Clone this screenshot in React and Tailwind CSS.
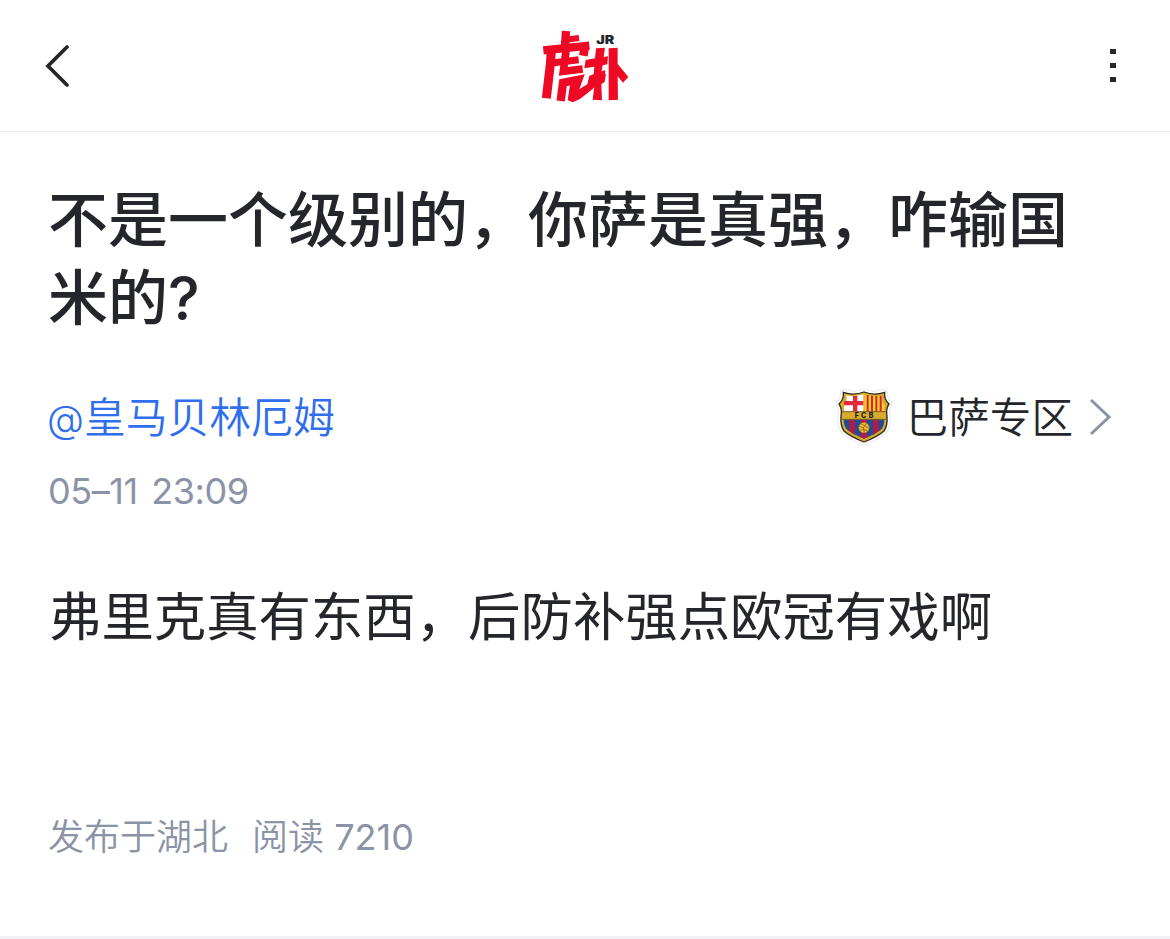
function HupuLogo() {
  return (
    <svg viewBox="0 0 330 270" className="mr-[10px] w-[110px] h-[90px]" aria-label="虎扑">
      <g fill="none" stroke="#ee0a24" strokeWidth="24">
        {/* left half of the mark */}
        <path d="M108 30L104 90" strokeWidth="25" />
        <path d="M106 56L147 51" strokeWidth="18" />
        <path d="M40 88L178 74" strokeWidth="25" />
        <path d="M165 74L160 104" strokeWidth="26" />
        <path d="M64 88L61 130L49 232" strokeWidth="27" />
        <path d="M60 127L146 116" strokeWidth="21" />
        <path d="M108 90L100 151L158 144" strokeWidth="23" />
        <path d="M92 240L99 185L145 176L132 212" strokeWidth="25" />
      </g>
      <g fill="#ee0a24">
        <path d="M121 184L150 174L144 207L172 190L178 164L226 147L222 184L198 196L150 234L128 244L113 238Z" />
        {/* right half of the mark */}
        <path d="M198 82L225 80L221 108L234 106L232 130L218 133L213 163L228 158L224 182L214 189L216 238L188 236L194 190L176 197L177 174L190 170L193 137L163 142L167 117L195 112Z" />
        <path d="M236 82L263 80L263 129L295 168L279 185L263 166L264 236L236 238Z" />
      </g>
      <text x="199" y="68" fontSize="36" fontWeight="900" fill="#24262b" textLength="54" lengthAdjust="spacingAndGlyphs" className="font-['Inter']">
        JR
      </text>
    </svg>
  )
}

const shieldPath =
  'M40 37Q70 48 102 36Q134 48 164 37Q162 59 177 72Q167 86 171 108Q173 136 163 152Q146 168 102 186Q58 168 41 152Q31 136 33 108Q37 86 27 72Q42 59 40 37Z'

function ClubBadge() {
  return (
    <svg viewBox="0 0 210 210" className="-mt-1 w-[70px] h-[70px]" aria-label="FCB">
      <defs>
        <clipPath id="shield">
          <path d={shieldPath} />
        </clipPath>
      </defs>
      <path d={shieldPath} fill="#fff" stroke="#dcdcdc" strokeWidth="20" strokeLinejoin="round" />
      <path d={shieldPath} fill="#d8ab2c" stroke="#fff" strokeWidth="16" strokeLinejoin="round" />
      <g clipPath="url(#shield)">
        <rect width="210" height="210" fill="#d8ab2c" />
        <path d="M49 46Q76 52 100 43V94H42V76Q53 66 49 46Z" fill="#fff" />
        <path d="M69 48H82V94H69ZM42 63H100V76H42Z" fill="#e22a3a" />
        <path d="M104 43Q130 52 155 46Q153 66 164 76L162 94H104Z" fill="#f8d030" />
        <path d="M110 45H116V94H110ZM123 47H129V94H123ZM136 48H142V94H136ZM149 47H155V94H149Z" fill="#d8232f" />
        <path d="M41 119H163Q162 138 155 147Q138 162 102 176Q66 162 49 147Q42 138 41 119Z" fill="#1f4c9a" />
        <path d="M58 119H75V165L58 154ZM92 119H112V172L102 176L92 172ZM129 119H146V154L129 165Z" fill="#b01c45" />
        <circle cx="102" cy="143" r="16" fill="#eebd2c" stroke="#8a6820" strokeWidth="2" />
        <path d="M88 139L100 143L110 130M100 143L103 157M94 132L102 136L116 145M92 151L101 148L113 153" fill="none" stroke="#6b5222" strokeWidth="2" />
      </g>
      <path d={shieldPath} fill="none" stroke="#2c2a22" strokeWidth="4" />
      <path d="M36 95H168M36 118H168" stroke="#4a3c18" strokeWidth="2" />
      <text x="74" y="114" fontSize="21" fontWeight="800" fill="#1c1c1c" textLength="56" className="font-['Inter']">
        FCB
      </text>
    </svg>
  )
}

function Header() {
  return (
    <header className="flex h-[132px] items-center justify-between border-b border-[#ebebed] pl-[44px] pr-[54px]">
      <svg viewBox="0 0 26 42" className="w-[26px] h-[42px]" fill="none" stroke="#24262b" strokeWidth="3.7">
        <path d="M23 2L4 21L23 40" strokeLinecap="round" />
      </svg>
      <HupuLogo />
      <div className="flex w-[6px] flex-col gap-[8.5px]">
        <span className="size-[5.5px] bg-[#24262b]" />
        <span className="size-[5.5px] bg-[#24262b]" />
        <span className="size-[5.5px] bg-[#24262b]" />
      </div>
    </header>
  )
}

export default function App() {
  return (
    <div className="flex h-[939px] w-[1170px] flex-col bg-white font-['Inter','Noto_Sans_CJK_SC',sans-serif] text-[#24262b]">
      <Header />
      <main className="flex-1 px-12">
        <h1 className="mt-[49px] text-[60px] font-medium leading-[78px]">
          不是一个级别的，你萨是真强，咋输国
          <br />
          米的?
        </h1>

        {/* author and board */}
        <div className="mt-[50px] flex h-[60px] items-center justify-between">
          <a className="pt-[2px] text-[41.8px] font-[350] text-[#2f6fed]">
            <span className="-ml-px text-[38px]">@</span>皇马贝林厄姆
          </a>
          <a className="flex items-center pr-[9px] text-[41.6px] font-[350]">
            <ClubBadge />
            <span className="ml-[7px] pt-[2px]">巴萨专区</span>
            <svg viewBox="0 0 24 40" className="ml-4 w-6 h-10" fill="none" stroke="#8b93a6" strokeWidth="3">
              <path d="M2 3L20 20L2 37" />
            </svg>
          </a>
        </div>
        <p className="mt-[19px] text-[36px] font-[370] leading-[50px] tracking-[-0.45px] text-[#8b93a6] [word-spacing:4px]">
          05–11 23:09
        </p>

        <p className="mt-[61px] pl-px text-[52.4px] leading-[80px]">弗里克真有东西，后防补强点欧冠有戏啊</p>

        <p className="mt-[155px] flex gap-6 text-[36px] font-[350] leading-[50px] text-[#8b93a6]">
          <span>发布于湖北</span>
          <span>
            阅读 <span className="font-[370]">7210</span>
          </span>
        </p>
      </main>
      <div className="h-[3px] bg-[#f0f0f5]" />
    </div>
  )
}
